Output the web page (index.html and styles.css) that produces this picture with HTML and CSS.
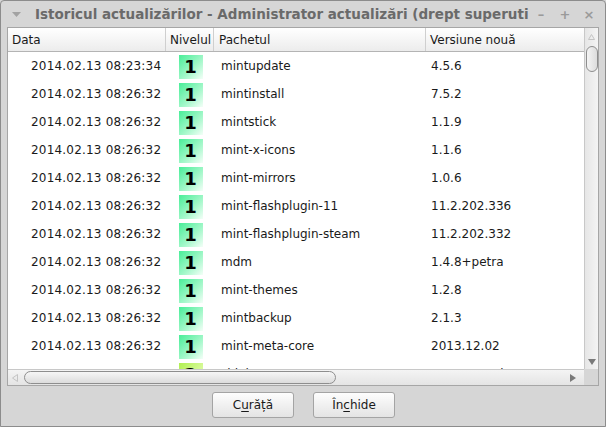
FILE: index.html
```html
<!DOCTYPE html>
<html>
<head>
<meta charset="utf-8">
<link rel="stylesheet" href="styles.css">
</head>
<body>
<div class="window">
  <div class="titlebar">
    <svg class="menu-arrow" width="9" height="6" viewBox="0 0 9 6"><path d="M0 0H9L4.5 5Z" fill="#a2a2a2"/></svg>
    <div class="title">Istoricul actualizărilor - Administrator actualizări (drept superuti</div>
    <div class="controls">
      <span class="ctl">–</span>
      <span class="ctl">+</span>
      <span class="ctl">×</span>
    </div>
  </div>
  <div class="frame">
    <div class="tree">
      <div class="header">
        <div class="hcol c-date">Data</div>
        <div class="hcol c-lvl">Nivelul</div>
        <div class="hcol c-pkg">Pachetul</div>
        <div class="hcol c-ver">Versiune nouă</div>
      </div>
      <div class="rows">
        <div class="row"><div class="c-date">2014.02.13 08:23:34</div><div class="c-lvl"><span class="badge l1">1</span></div><div class="c-pkg">mintupdate</div><div class="c-ver">4.5.6</div></div>
        <div class="row"><div class="c-date">2014.02.13 08:26:32</div><div class="c-lvl"><span class="badge l1">1</span></div><div class="c-pkg">mintinstall</div><div class="c-ver">7.5.2</div></div>
        <div class="row"><div class="c-date">2014.02.13 08:26:32</div><div class="c-lvl"><span class="badge l1">1</span></div><div class="c-pkg">mintstick</div><div class="c-ver">1.1.9</div></div>
        <div class="row"><div class="c-date">2014.02.13 08:26:32</div><div class="c-lvl"><span class="badge l1">1</span></div><div class="c-pkg">mint-x-icons</div><div class="c-ver">1.1.6</div></div>
        <div class="row"><div class="c-date">2014.02.13 08:26:32</div><div class="c-lvl"><span class="badge l1">1</span></div><div class="c-pkg">mint-mirrors</div><div class="c-ver">1.0.6</div></div>
        <div class="row"><div class="c-date">2014.02.13 08:26:32</div><div class="c-lvl"><span class="badge l1">1</span></div><div class="c-pkg">mint-flashplugin-11</div><div class="c-ver">11.2.202.336</div></div>
        <div class="row"><div class="c-date">2014.02.13 08:26:32</div><div class="c-lvl"><span class="badge l1">1</span></div><div class="c-pkg">mint-flashplugin-steam</div><div class="c-ver">11.2.202.332</div></div>
        <div class="row"><div class="c-date">2014.02.13 08:26:32</div><div class="c-lvl"><span class="badge l1">1</span></div><div class="c-pkg">mdm</div><div class="c-ver">1.4.8+petra</div></div>
        <div class="row"><div class="c-date">2014.02.13 08:26:32</div><div class="c-lvl"><span class="badge l1">1</span></div><div class="c-pkg">mint-themes</div><div class="c-ver">1.2.8</div></div>
        <div class="row"><div class="c-date">2014.02.13 08:26:32</div><div class="c-lvl"><span class="badge l1">1</span></div><div class="c-pkg">mintbackup</div><div class="c-ver">2.1.3</div></div>
        <div class="row"><div class="c-date">2014.02.13 08:26:32</div><div class="c-lvl"><span class="badge l1">1</span></div><div class="c-pkg">mint-meta-core</div><div class="c-ver">2013.12.02</div></div>
        <div class="row"><div class="c-date">2014.02.13 08:26:32</div><div class="c-lvl"><span class="badge l2">2</span></div><div class="c-pkg">sidej</div><div class="c-ver">1.2.10-7.0ubuntu4.1.13</div></div>
      </div>
    </div>
    <div class="vscroll">
      <svg class="arr" width="7" height="6" viewBox="0 0 7 6"><path d="M3.5 0.5L6.5 5.5H0.5Z" fill="none" stroke="#c4c4c4" stroke-width="1"/></svg>
      <div class="vthumb"></div>
      <div class="vspace"></div>
      <svg class="arr" width="8" height="6" viewBox="0 0 8 6"><path d="M0 0H8L4 6Z" fill="#7a7a7a"/></svg>
    </div>
    <div class="hscroll">
      <svg class="harr" width="6" height="8" viewBox="0 0 6 8"><path d="M5.5 0.5V7.5L0.5 4Z" fill="none" stroke="#c4c4c4" stroke-width="1"/></svg>
      <div class="hthumb"></div>
      <div class="hspace"></div>
      <svg class="harr" width="6" height="8" viewBox="0 0 6 8"><path d="M0 0V8L6 4Z" fill="#7a7a7a"/></svg>
    </div>
    <div class="corner"></div>
  </div>
  <div class="buttons">
    <button class="btn">C<u>u</u>răță</button>
    <button class="btn">În<u>c</u>hide</button>
  </div>
</div>
</body>
</html>
```
FILE: styles.css
```css
* { box-sizing: border-box; }
html, body {
  margin: 0;
  padding: 0;
  width: 606px;
  height: 427px;
  overflow: hidden;
  background: #d6d6d6;
  font-family: "DejaVu Sans", sans-serif;
  font-size: 12px;
  color: #1a1a1a;
}
.window {
  width: 606px;
  height: 427px;
  border: 1px solid #8c8c8c;
  border-radius: 4px 4px 0 0;
  background: #d6d6d6;
  display: flex;
  flex-direction: column;
}
.titlebar {
  height: 26px;
  display: flex;
  align-items: center;
  padding-left: 11px;
  padding-right: 8px;
  flex-shrink: 0;
}
.menu-arrow { margin-top: 2px; flex-shrink: 0; }
.title {
  margin-left: 14px;
  font-weight: bold;
  font-size: 13.5px;
  color: #6a6a6a;
  white-space: nowrap;
  overflow: hidden;
  flex: 1;
  min-width: 0;
}
.controls {
  display: flex;
  gap: 8px;
  flex-shrink: 0;
}
.ctl {
  width: 16px;
  text-align: center;
  color: #9a9a9a;
  font-size: 13px;
  font-weight: bold;
}
.frame {
  margin-left: 6px;
  width: 592px;
  height: 359px;
  border: 1px solid #a6a6a6;
  display: grid;
  grid-template-columns: 576px 14px;
  grid-template-rows: 341px 16px;
  background: #fff;
  flex-shrink: 0;
}
.tree {
  overflow: hidden;
  background: #fff;
  display: flex;
  flex-direction: column;
}
.header {
  height: 24px;
  flex-shrink: 0;
  display: flex;
  background: linear-gradient(#ffffff, #ececec);
  border-bottom: 1px solid #b4b4b4;
}
.hcol {
  display: flex;
  align-items: center;
  height: 100%;
  border-right: 1px solid #cfcfcf;
  white-space: nowrap;
  overflow: hidden;
}
.header .c-date { padding-left: 4px; }
.header .c-lvl { padding-left: 4px; }
.header .c-pkg { padding-left: 5px; }
.header .c-ver { padding-left: 4px; border-right: none; }
.c-date { width: 158px; flex-shrink: 0; }
.c-lvl { width: 48px; flex-shrink: 0; }
.c-pkg { width: 212px; flex-shrink: 0; }
.c-ver { flex: 1; }
.rows { display: flex; flex-direction: column; }
.row {
  height: 28px;
  display: flex;
  align-items: center;
  flex-shrink: 0;
  white-space: nowrap;
}
.row .c-date { padding-left: 23px; letter-spacing: 0.2px; }
.row .c-lvl { display: flex; justify-content: center; padding-left: 1px; }
.row .c-pkg { padding-left: 7px; }
.row .c-ver { padding-left: 5px; }
.badge {
  width: 24px;
  height: 24px;
  display: flex;
  align-items: center;
  justify-content: center;
  font-weight: bold;
  font-size: 18px;
  color: #000;
  margin-top: 1px;
}
.badge.l1 { background: linear-gradient(135deg, #48ee98 0%, #a8f8cc 60%, #f4fff8 100%); }
.badge.l2 { background: linear-gradient(135deg, #b0f050 0%, #d8fa9c 60%, #f8fff0 100%); }
.vscroll {
  background: linear-gradient(90deg, #e6e6e6, #f4f4f4);
  border-left: 1px solid #c8c8c8;
  display: flex;
  flex-direction: column;
  align-items: center;
  padding: 6px 0 4px;
}
.arr { flex-shrink: 0; }
.vthumb {
  margin-top: 6px;
  width: 12px;
  height: 26px;
  border: 1px solid #8e8e8e;
  border-radius: 6px;
  background: linear-gradient(90deg, #f4f4f4, #dcdcdc);
  flex-shrink: 0;
}
.vspace { flex: 1; }
.hscroll {
  background: linear-gradient(#f4f4f4, #e4e4e4);
  border-top: 1px solid #c8c8c8;
  display: flex;
  align-items: center;
  padding: 0 8px 0 4px;
}
.harr { flex-shrink: 0; }
.hthumb {
  margin-left: 6px;
  width: 312px;
  height: 13px;
  border: 1px solid #8e8e8e;
  border-radius: 7px;
  background: linear-gradient(#f6f6f6, #dcdcdc);
}
.hspace { flex: 1; }
.corner { background: #d6d6d6; }
.buttons {
  flex: 1;
  display: flex;
  justify-content: center;
  align-items: center;
  gap: 19px;
  padding-left: 1px;
  padding-bottom: 2px;
}
.btn {
  width: 82px;
  height: 26px;
  border: 1px solid #a4a4a4;
  border-radius: 3px;
  background: linear-gradient(#fdfdfd, #e4e4e4);
  font-family: "DejaVu Sans", sans-serif;
  font-size: 12px;
  color: #1a1a1a;
  padding: 0;
}
.btn u { text-underline-offset: 2px; }
```
